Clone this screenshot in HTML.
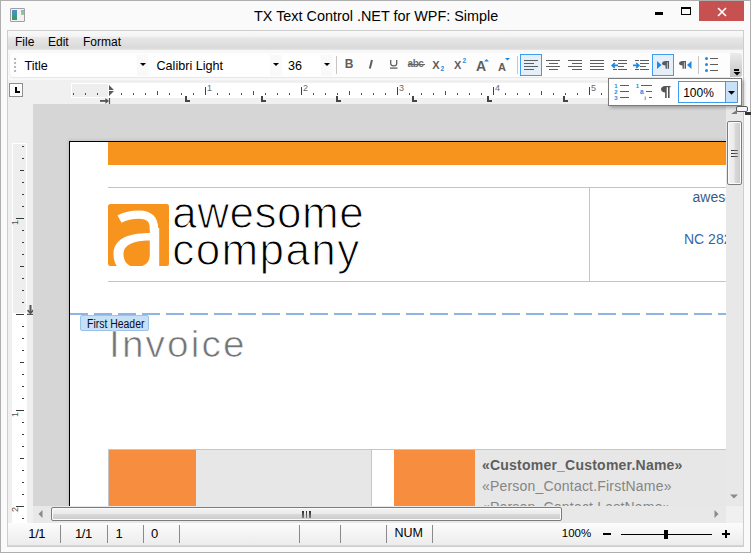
<!DOCTYPE html>
<html><head><meta charset="utf-8">
<style>
*{margin:0;padding:0;box-sizing:border-box}
html,body{width:751px;height:553px;overflow:hidden}
body{position:relative;background:#fafafa;font-family:"Liberation Sans",sans-serif;color:#000}
.a{position:absolute}
.t{position:absolute;white-space:nowrap;line-height:1}
svg{position:absolute;overflow:visible}
</style></head><body>

<div class="a" style="left:0px;top:0px;width:751px;height:553px;border:1px solid #aeaeae"></div>
<div class="a" style="left:10px;top:8px;width:15px;height:14px;border:1px solid #a0a0a0;background:#f2f2f2;border-radius:1px"></div>
<div class="a" style="left:12px;top:10px;width:5px;height:10px;background:linear-gradient(#4a8fcf,#3b9a5a)"></div>
<div class="a" style="left:21px;top:10px;width:3px;height:5px;background:linear-gradient(#7fb0e0,#9fd080)"></div>
<div class="t" style="left:254px;top:8.6px;font-size:14.4px;color:#000">TX Text Control .NET for WPF: Simple</div>
<div class="a" style="left:655px;top:12px;width:8px;height:3px;background:#000"></div>
<div class="a" style="left:681px;top:7px;width:10px;height:8px;border:1px solid #000;border-top-width:2px"></div>
<div class="a" style="left:699px;top:1px;width:45px;height:20px;background:#c75050"></div>
<svg style="left:717px;top:8px" width="10" height="8" viewBox="0 0 10 8"><path d="M1 0 L9 8 M9 0 L1 8" stroke="#fff" stroke-width="1.7"/></svg>
<div class="a" style="left:7px;top:30px;width:737px;height:517px;border:1px solid #cdcdcd;background:#f0f0f0"></div>
<div class="a" style="left:8px;top:31px;width:735px;height:19px;background:linear-gradient(#f8f8f8 0px,#f5f5f5 5px,#e7e7e7 7px,#dadada 17px,#e6e6e6 19px)"></div>
<div class="t" style="left:15px;top:35.6px;font-size:12px">File</div>
<div class="t" style="left:48px;top:35.6px;font-size:12px">Edit</div>
<div class="t" style="left:83px;top:35.6px;font-size:12px">Format</div>
<div class="a" style="left:8px;top:50px;width:735px;height:30px;background:#f8f8f8"></div>
<div class="a" style="left:10px;top:53px;width:722px;height:24px;background:#fdfdfd;border-radius:3px;box-shadow:0 1px 0 #e8e8e8,-1px 0 0 #f0f0f0"></div>
<div class="a" style="left:730px;top:53px;width:12px;height:24px;background:linear-gradient(#ebebeb,#c4c4c4);border-radius:0 3px 3px 0"></div>
<div class="a" style="left:734px;top:69px;width:5px;height:2px;background:#000"></div>
<svg style="left:733px;top:72px" width="8" height="4" viewBox="0 0 8 4"><path d="M0.5 0 L7.5 0 L4 3.6Z" fill="#000"/></svg>
<div class="a" style="left:14px;top:58px;width:2px;height:2px;background:#b8b8b8"></div>
<div class="a" style="left:14px;top:62px;width:2px;height:2px;background:#b8b8b8"></div>
<div class="a" style="left:14px;top:66px;width:2px;height:2px;background:#b8b8b8"></div>
<div class="a" style="left:14px;top:70px;width:2px;height:2px;background:#b8b8b8"></div>
<div class="a" style="left:19px;top:55px;width:129px;height:20.7px;background:#fff"></div>
<div class="a" style="left:137px;top:55px;width:11px;height:20.7px;background:#f9f9fa"></div>
<svg style="left:139.5px;top:63px" width="6" height="3" viewBox="0 0 6 3"><path d="M0 0 L6 0 L3 3Z" fill="#000"/></svg>
<div class="t" style="left:24.5px;top:60.0px;font-size:12.6px">Title</div>
<div class="a" style="left:151px;top:55px;width:130px;height:20.7px;background:#fff"></div>
<div class="a" style="left:270px;top:55px;width:11px;height:20.7px;background:#f9f9fa"></div>
<svg style="left:272.5px;top:63px" width="6" height="3" viewBox="0 0 6 3"><path d="M0 0 L6 0 L3 3Z" fill="#000"/></svg>
<div class="t" style="left:156.5px;top:60.0px;font-size:12.6px">Calibri Light</div>
<div class="a" style="left:283px;top:55px;width:49px;height:20.7px;background:#fff"></div>
<div class="a" style="left:321px;top:55px;width:11px;height:20.7px;background:#f9f9fa"></div>
<svg style="left:323.5px;top:63px" width="6" height="3" viewBox="0 0 6 3"><path d="M0 0 L6 0 L3 3Z" fill="#000"/></svg>
<div class="t" style="left:288px;top:60.0px;font-size:12.6px">36</div>
<div class="a" style="left:336px;top:56px;width:1px;height:18px;background:#c6c6c6"></div>
<div class="a" style="left:517px;top:56px;width:1px;height:18px;background:#c6c6c6"></div>
<div class="a" style="left:698px;top:56px;width:1px;height:18px;background:#c6c6c6"></div>
<div class="t" style="left:344.7px;top:58.4px;font-size:12px;font-weight:bold;color:#5e5e5e">B</div>
<svg style="left:367px;top:59px" width="8" height="11" viewBox="0 0 8 11"><path d="M5.0 1 L2.8 9.5" stroke="#5e5e5e" stroke-width="2"/></svg>
<svg style="left:389px;top:60px" width="10" height="10" viewBox="0 0 10 10"><path d="M1.7 0 V3.6 Q1.7 5.8 4.7 5.8 Q7.7 5.8 7.7 3.6 V0" fill="none" stroke="#5e5e5e" stroke-width="1.3"/><path d="M1 8.1 H8.5" stroke="#5e5e5e" stroke-width="1.3"/></svg>
<div class="t" style="left:407.6px;top:58.8px;font-size:10px;font-weight:bold;color:#6e6e6e;letter-spacing:-0.5px">abc</div>
<div class="a" style="left:407.5px;top:63.5px;width:17px;height:1px;background:#666"></div>
<div class="t" style="left:432.2px;top:59.8px;font-size:11px;font-weight:bold;color:#5e5e5e">X</div>
<div class="t" style="left:440.5px;top:65.7px;font-size:6.5px;font-weight:bold;color:#1a8ae8">2</div>
<div class="t" style="left:454.0px;top:59.8px;font-size:11px;font-weight:bold;color:#5e5e5e">X</div>
<div class="t" style="left:462.6px;top:58.25px;font-size:6.5px;font-weight:bold;color:#1a8ae8">2</div>
<div class="t" style="left:475.9px;top:59px;font-size:14px;font-weight:bold;color:#5e5e5e">A</div>
<svg style="left:484.2px;top:58.5px" width="5" height="2.5" viewBox="0 0 5 2.5"><path d="M0 2.5 L5 2.5 L2.5 0Z" fill="#1a8ae8"/></svg>
<div class="t" style="left:497.9px;top:61.6px;font-size:11px;font-weight:bold;color:#5e5e5e">A</div>
<svg style="left:505px;top:58.4px" width="5" height="2.5" viewBox="0 0 5 2.5"><path d="M0 0 L5 0 L2.5 2.5Z" fill="#1a8ae8"/></svg>
<div class="a" style="left:520px;top:54px;width:22px;height:22px;background:#e4effa;border:1px solid #3d9bf0"></div>
<div class="a" style="left:652px;top:54px;width:22px;height:22px;background:#e4effa;border:1px solid #3d9bf0"></div>
<div class="a" style="left:524px;top:60px;width:14px;height:1.4px;background:#5e5e5e"></div><div class="a" style="left:524px;top:63px;width:10px;height:1.4px;background:#5e5e5e"></div><div class="a" style="left:524px;top:66px;width:14px;height:1.4px;background:#5e5e5e"></div><div class="a" style="left:524px;top:69px;width:10px;height:1.4px;background:#5e5e5e"></div>
<div class="a" style="left:546px;top:60px;width:14px;height:1.4px;background:#5e5e5e"></div><div class="a" style="left:548.5px;top:63px;width:9.5px;height:1.4px;background:#5e5e5e"></div><div class="a" style="left:546px;top:66px;width:14px;height:1.4px;background:#5e5e5e"></div><div class="a" style="left:548.5px;top:69px;width:9.5px;height:1.4px;background:#5e5e5e"></div>
<div class="a" style="left:568px;top:60px;width:14px;height:1.4px;background:#5e5e5e"></div><div class="a" style="left:572px;top:63px;width:10px;height:1.4px;background:#5e5e5e"></div><div class="a" style="left:568px;top:66px;width:14px;height:1.4px;background:#5e5e5e"></div><div class="a" style="left:572px;top:69px;width:10px;height:1.4px;background:#5e5e5e"></div>
<div class="a" style="left:590px;top:60px;width:14px;height:1.4px;background:#5e5e5e"></div><div class="a" style="left:590px;top:63px;width:14px;height:1.4px;background:#5e5e5e"></div><div class="a" style="left:590px;top:66px;width:14px;height:1.4px;background:#5e5e5e"></div><div class="a" style="left:590px;top:69px;width:14px;height:1.4px;background:#5e5e5e"></div>
<div class="a" style="left:613px;top:60px;width:4px;height:1.4px;background:#5e5e5e"></div><div class="a" style="left:618px;top:63px;width:9px;height:1.4px;background:#5e5e5e"></div><div class="a" style="left:618px;top:66px;width:5.800000000000001px;height:1.4px;background:#5e5e5e"></div><div class="a" style="left:613px;top:69px;width:4px;height:1.4px;background:#5e5e5e"></div>
<div class="a" style="left:618px;top:60px;width:9px;height:1.4px;background:#5e5e5e"></div><div class="a" style="left:618px;top:69px;width:9px;height:1.4px;background:#5e5e5e"></div>
<div class="a" style="left:635px;top:60px;width:4px;height:1.4px;background:#5e5e5e"></div><div class="a" style="left:640px;top:63px;width:9px;height:1.4px;background:#5e5e5e"></div><div class="a" style="left:640px;top:66px;width:5.800000000000001px;height:1.4px;background:#5e5e5e"></div><div class="a" style="left:635px;top:69px;width:4px;height:1.4px;background:#5e5e5e"></div>
<div class="a" style="left:640px;top:60px;width:9px;height:1.4px;background:#5e5e5e"></div><div class="a" style="left:640px;top:69px;width:9px;height:1.4px;background:#5e5e5e"></div>
<svg style="left:611px;top:61.5px" width="8" height="7" viewBox="0 0 8 7"><path d="M7 3.4 H1.5 M3.8 1 L1.2 3.4 L3.8 5.8" fill="none" stroke="#1a8ae8" stroke-width="1.7"/></svg>
<svg style="left:633px;top:61.5px" width="8" height="7" viewBox="0 0 8 7"><path d="M0 3.4 H5.5 M3.2 1 L5.8 3.4 L3.2 5.8" fill="none" stroke="#1a8ae8" stroke-width="1.7"/></svg>
<svg style="left:657px;top:61px" width="5" height="8" viewBox="0 0 5 8"><path d="M0 0 L4.5 4 L0 8Z" fill="#1a8ae8"/></svg>
<svg style="left:662px;top:61px" width="7" height="8" viewBox="0 0 7 8"><path d="M4.6 0 H7 V7.7 H5.6 V1.3 H4.9 V7.7 H3.5 V4.6 C1.5 4.6 0 3.6 0 2.3 C0 1 1.5 0 3.5 0 Z" fill="#5a5a5a"/></svg>
<svg style="left:679px;top:61px" width="7" height="8" viewBox="0 0 7 8"><path d="M4.6 0 H7 V7.7 H5.6 V1.3 H4.9 V7.7 H3.5 V4.6 C1.5 4.6 0 3.6 0 2.3 C0 1 1.5 0 3.5 0 Z" fill="#5a5a5a"/></svg>
<svg style="left:686.5px;top:61px" width="5" height="8" viewBox="0 0 5 8"><path d="M4.5 0 L0 4 L4.5 8Z" fill="#1a8ae8"/></svg>
<div class="a" style="left:705px;top:56.9px;width:3px;height:3px;border-radius:50%;background:#1a8ae8"></div>
<div class="a" style="left:710px;top:57.8px;width:8px;height:1.3px;background:#5e5e5e"></div>
<div class="a" style="left:705px;top:62.900000000000006px;width:3px;height:3px;border-radius:50%;background:#1a8ae8"></div>
<div class="a" style="left:710px;top:63.800000000000004px;width:8px;height:1.3px;background:#5e5e5e"></div>
<div class="a" style="left:705px;top:68.9px;width:3px;height:3px;border-radius:50%;background:#1a8ae8"></div>
<div class="a" style="left:710px;top:69.80000000000001px;width:8px;height:1.3px;background:#5e5e5e"></div>
<div class="a" style="left:8px;top:80px;width:735px;height:24px;background:#f0f0f0"></div>
<div class="a" style="left:9px;top:83px;width:14px;height:14px;background:#fbfbfb;border:1px solid #8e8e8e"></div>
<div class="a" style="left:15px;top:87px;width:2px;height:6px;background:#000"></div>
<div class="a" style="left:15px;top:91px;width:5px;height:2px;background:#000"></div>
<div class="a" style="left:71px;top:83px;width:537px;height:15px;background:#ffffff"></div>
<div class="a" style="left:72px;top:84px;width:36px;height:13px;background:#eeeeee"></div>
<div class="a" style="left:73px;top:93px;width:1px;height:2px;background:#505050"></div><div class="a" style="left:85px;top:93px;width:1px;height:2px;background:#505050"></div><div class="a" style="left:97px;top:93px;width:1px;height:2px;background:#505050"></div><div class="a" style="left:121px;top:93px;width:1px;height:2px;background:#505050"></div><div class="a" style="left:133px;top:93px;width:1px;height:2px;background:#505050"></div><div class="a" style="left:145px;top:93px;width:1px;height:2px;background:#505050"></div><div class="a" style="left:157px;top:91px;width:1px;height:4px;background:#505050"></div><div class="a" style="left:169px;top:93px;width:1px;height:2px;background:#505050"></div><div class="a" style="left:181px;top:93px;width:1px;height:2px;background:#505050"></div><div class="a" style="left:193px;top:93px;width:1px;height:2px;background:#505050"></div><div class="a" style="left:205px;top:87px;width:1px;height:8px;background:#404040"></div><div class="t" style="left:207px;top:83.5px;font-size:9px;color:#6a6a6a">1</div><div class="a" style="left:217px;top:93px;width:1px;height:2px;background:#505050"></div><div class="a" style="left:229px;top:93px;width:1px;height:2px;background:#505050"></div><div class="a" style="left:241px;top:93px;width:1px;height:2px;background:#505050"></div><div class="a" style="left:253px;top:91px;width:1px;height:4px;background:#505050"></div><div class="a" style="left:265px;top:93px;width:1px;height:2px;background:#505050"></div><div class="a" style="left:277px;top:93px;width:1px;height:2px;background:#505050"></div><div class="a" style="left:289px;top:93px;width:1px;height:2px;background:#505050"></div><div class="a" style="left:301px;top:87px;width:1px;height:8px;background:#404040"></div><div class="t" style="left:303px;top:83.5px;font-size:9px;color:#6a6a6a">2</div><div class="a" style="left:313px;top:93px;width:1px;height:2px;background:#505050"></div><div class="a" style="left:325px;top:93px;width:1px;height:2px;background:#505050"></div><div class="a" style="left:337px;top:93px;width:1px;height:2px;background:#505050"></div><div class="a" style="left:349px;top:91px;width:1px;height:4px;background:#505050"></div><div class="a" style="left:361px;top:93px;width:1px;height:2px;background:#505050"></div><div class="a" style="left:373px;top:93px;width:1px;height:2px;background:#505050"></div><div class="a" style="left:385px;top:93px;width:1px;height:2px;background:#505050"></div><div class="a" style="left:397px;top:87px;width:1px;height:8px;background:#404040"></div><div class="t" style="left:399px;top:83.5px;font-size:9px;color:#6a6a6a">3</div><div class="a" style="left:409px;top:93px;width:1px;height:2px;background:#505050"></div><div class="a" style="left:421px;top:93px;width:1px;height:2px;background:#505050"></div><div class="a" style="left:433px;top:93px;width:1px;height:2px;background:#505050"></div><div class="a" style="left:445px;top:91px;width:1px;height:4px;background:#505050"></div><div class="a" style="left:457px;top:93px;width:1px;height:2px;background:#505050"></div><div class="a" style="left:469px;top:93px;width:1px;height:2px;background:#505050"></div><div class="a" style="left:481px;top:93px;width:1px;height:2px;background:#505050"></div><div class="a" style="left:493px;top:87px;width:1px;height:8px;background:#404040"></div><div class="t" style="left:495px;top:83.5px;font-size:9px;color:#6a6a6a">4</div><div class="a" style="left:505px;top:93px;width:1px;height:2px;background:#505050"></div><div class="a" style="left:517px;top:93px;width:1px;height:2px;background:#505050"></div><div class="a" style="left:529px;top:93px;width:1px;height:2px;background:#505050"></div><div class="a" style="left:541px;top:91px;width:1px;height:4px;background:#505050"></div><div class="a" style="left:553px;top:93px;width:1px;height:2px;background:#505050"></div><div class="a" style="left:565px;top:93px;width:1px;height:2px;background:#505050"></div><div class="a" style="left:577px;top:93px;width:1px;height:2px;background:#505050"></div><div class="a" style="left:589px;top:87px;width:1px;height:8px;background:#404040"></div><div class="t" style="left:591px;top:83.5px;font-size:9px;color:#6a6a6a">5</div><div class="a" style="left:601px;top:93px;width:1px;height:2px;background:#505050"></div>
<svg style="left:109px;top:85px" width="6" height="11" viewBox="0 0 6 11"><path d="M0 0 L5 5 L0 5 Z M0 6 L5 6 L0 11Z" fill="#5a5a5a"/></svg>
<svg style="left:100px;top:98px" width="11" height="6" viewBox="0 0 11 6"><path d="M0 2.9 H7" stroke="#555" stroke-width="1.8"/><path d="M5.4 0 L9 2.9 L5.4 5.8Z" fill="#555"/><path d="M9.5 0 V6" stroke="#555" stroke-width="1.2"/></svg>
<div class="a" style="left:185px;top:96px;width:2px;height:6px;background:#454545"></div>
<div class="a" style="left:185px;top:100px;width:5px;height:2px;background:#454545"></div>
<div class="a" style="left:261px;top:96px;width:2px;height:6px;background:#454545"></div>
<div class="a" style="left:261px;top:100px;width:5px;height:2px;background:#454545"></div>
<div class="a" style="left:336px;top:96px;width:2px;height:6px;background:#454545"></div>
<div class="a" style="left:336px;top:100px;width:5px;height:2px;background:#454545"></div>
<div class="a" style="left:412px;top:96px;width:2px;height:6px;background:#454545"></div>
<div class="a" style="left:412px;top:100px;width:5px;height:2px;background:#454545"></div>
<div class="a" style="left:487px;top:96px;width:2px;height:6px;background:#454545"></div>
<div class="a" style="left:487px;top:100px;width:5px;height:2px;background:#454545"></div>
<div class="a" style="left:563px;top:96px;width:2px;height:6px;background:#454545"></div>
<div class="a" style="left:563px;top:100px;width:5px;height:2px;background:#454545"></div>
<div class="a" style="left:8px;top:104px;width:25px;height:419px;background:#f0f0f0"></div>
<div class="a" style="left:12px;top:143px;width:15px;height:380px;background:#ffffff"></div>
<div class="a" style="left:13px;top:144px;width:13px;height:169px;background:#eeeeee"></div>
<div class="a" style="left:22px;top:146px;width:2px;height:1px;background:#3a3a3a"></div><div class="a" style="left:22px;top:158px;width:2px;height:1px;background:#3a3a3a"></div><div class="a" style="left:20px;top:170px;width:4px;height:1px;background:#3a3a3a"></div><div class="a" style="left:22px;top:182px;width:2px;height:1px;background:#3a3a3a"></div><div class="a" style="left:22px;top:194px;width:2px;height:1px;background:#3a3a3a"></div><div class="a" style="left:22px;top:206px;width:2px;height:1px;background:#3a3a3a"></div><div class="a" style="left:16px;top:218px;width:8px;height:1px;background:#3a3a3a"></div><div class="a" style="left:22px;top:230px;width:2px;height:1px;background:#3a3a3a"></div><div class="a" style="left:22px;top:242px;width:2px;height:1px;background:#3a3a3a"></div><div class="a" style="left:22px;top:254px;width:2px;height:1px;background:#3a3a3a"></div><div class="a" style="left:20px;top:266px;width:4px;height:1px;background:#3a3a3a"></div><div class="a" style="left:22px;top:278px;width:2px;height:1px;background:#3a3a3a"></div><div class="a" style="left:22px;top:290px;width:2px;height:1px;background:#3a3a3a"></div><div class="a" style="left:22px;top:302px;width:2px;height:1px;background:#3a3a3a"></div><div class="a" style="left:16px;top:314px;width:8px;height:1px;background:#3a3a3a"></div><div class="a" style="left:22px;top:326px;width:2px;height:1px;background:#3a3a3a"></div><div class="a" style="left:22px;top:338px;width:2px;height:1px;background:#3a3a3a"></div><div class="a" style="left:22px;top:350px;width:2px;height:1px;background:#3a3a3a"></div><div class="a" style="left:20px;top:362px;width:4px;height:1px;background:#3a3a3a"></div><div class="a" style="left:22px;top:374px;width:2px;height:1px;background:#3a3a3a"></div><div class="a" style="left:22px;top:386px;width:2px;height:1px;background:#3a3a3a"></div><div class="a" style="left:22px;top:398px;width:2px;height:1px;background:#3a3a3a"></div><div class="a" style="left:16px;top:410px;width:8px;height:1px;background:#3a3a3a"></div><div class="a" style="left:22px;top:422px;width:2px;height:1px;background:#3a3a3a"></div><div class="a" style="left:22px;top:434px;width:2px;height:1px;background:#3a3a3a"></div><div class="a" style="left:22px;top:446px;width:2px;height:1px;background:#3a3a3a"></div><div class="a" style="left:20px;top:458px;width:4px;height:1px;background:#3a3a3a"></div><div class="a" style="left:22px;top:470px;width:2px;height:1px;background:#3a3a3a"></div><div class="a" style="left:22px;top:482px;width:2px;height:1px;background:#3a3a3a"></div><div class="a" style="left:22px;top:494px;width:2px;height:1px;background:#3a3a3a"></div><div class="a" style="left:16px;top:506px;width:8px;height:1px;background:#3a3a3a"></div><div class="a" style="left:22px;top:518px;width:2px;height:1px;background:#3a3a3a"></div>
<div class="t" style="left:11.3px;top:224.8px;font-size:9px;color:#505050;transform:rotate(-90deg);transform-origin:0 0">1</div>
<div class="t" style="left:11.3px;top:416.9px;font-size:9px;color:#505050;transform:rotate(-90deg);transform-origin:0 0">1</div>
<div class="t" style="left:11.3px;top:512px;font-size:9px;color:#505050;transform:rotate(-90deg);transform-origin:0 0">2</div>
<svg style="left:27px;top:305px" width="7" height="11" viewBox="0 0 7 11"><path d="M3.5 0 V7.5" stroke="#555" stroke-width="2"/><path d="M0.6 5.2 L3.5 8.3 L6.4 5.2" fill="none" stroke="#555" stroke-width="1.7"/><path d="M0 9.4 H7" stroke="#555" stroke-width="1.2"/></svg>
<div class="a" style="left:33px;top:104px;width:693px;height:402px;overflow:hidden;background:#d6d6d6">
<div class="a" style="left:36px;top:37px;width:720px;height:420px;background:#fff;border-left:1px solid #000;border-top:1px solid #000;box-shadow:-1px -1px 3px rgba(0,0,0,0.10)"></div>
<div class="a" style="left:75px;top:38px;width:640px;height:22.5px;background:#f7941e"></div>
<div class="a" style="left:75px;top:83px;width:640px;height:1px;background:#c4c4c4"></div>
<div class="a" style="left:75px;top:177px;width:640px;height:1px;background:#c4c4c4"></div>
<div class="a" style="left:556px;top:84px;width:1px;height:93px;background:#c4c4c4"></div>
<svg style="left:75px;top:100px" width="61" height="62" viewBox="0 0 61 62"><defs><clipPath id="cl"><rect x="0" y="0" width="61" height="62" rx="2.5"/></clipPath></defs><g clip-path="url(#cl)"><rect x="0" y="0" width="61" height="62" fill="#f7941e"/><path d="M11.5 15 C 18 11.5, 25 10.6, 31 10.6 C 42 10.6, 46 16, 46 25" fill="none" stroke="#fff" stroke-width="8.4"/><rect x="41.8" y="24" width="9.4" height="40" fill="#fff"/><path fill-rule="evenodd" fill="#fff" d="M42 29 C 26 29, 5.5 32, 5.5 50 C 5.5 64, 16 72, 30 72 L 42 72 Z M42 36.5 C 31 36.5, 15.5 38.5, 15.5 50 C 15.5 58.5, 21 63, 28 63 C 36 63, 42 59, 42 50 Z"/></g></svg>
<div class="t" style="left:139.3px;top:87px;font-size:44px;color:#000;letter-spacing:0.5px;-webkit-text-stroke:1.1px #fff">awesome</div>
<div class="t" style="left:139.3px;top:124.2px;font-size:44px;color:#000;letter-spacing:1.4px;-webkit-text-stroke:1.1px #fff">company</div>
<div class="t" style="left:659.5px;top:86.1px;font-size:14px;color:#3b5a8a">awesome</div>
<div class="t" style="left:651px;top:127.6px;font-size:14px;color:#3566a8">NC 28299</div>
<svg style="left:36px;top:209px" width="660" height="2"><line x1="0" y1="1" x2="660" y2="1" stroke="#8db4e3" stroke-width="2" stroke-dasharray="18 6" stroke-dashoffset="-1"/></svg>
<div class="a" style="left:47px;top:211px;width:69px;height:16px;background:#c6e0f6;border:1px solid #9cc4ea;border-radius:2px"></div>
<div class="t" style="left:53.6px;top:214.3px;font-size:12px;color:#0a0a20;transform:scaleX(0.87);transform-origin:0 0">First Header</div>
<div class="t" style="left:76.4px;top:223px;font-size:36px;color:#747474;letter-spacing:2px;-webkit-text-stroke:0.7px #fff;transform:scaleX(1.075);transform-origin:0 0">Invoice</div>
<div class="a" style="left:75px;top:345px;width:640px;height:60px;background:#e7e7e7;border-top:1px solid #c6c6c6;border-left:1px solid #c6c6c6"></div>
<div class="a" style="left:76px;top:346px;width:87px;height:60px;background:#f78d3f"></div>
<div class="a" style="left:338px;top:346px;width:1px;height:60px;background:#c6c6c6"></div>
<div class="a" style="left:339px;top:346px;width:22px;height:60px;background:#fff"></div>
<div class="a" style="left:361px;top:346px;width:81px;height:60px;background:#f78d3f"></div>
<div class="t" style="left:449px;top:354.2px;font-size:14px;font-weight:bold;color:#5e5e5e;letter-spacing:0.22px">&laquo;Customer_Customer.Name&raquo;</div>
<div class="t" style="left:449px;top:374.7px;font-size:14px;color:#858585;letter-spacing:0.2px">&laquo;Person_Contact.FirstName&raquo;</div>
<div class="t" style="left:449px;top:396px;font-size:14px;color:#858585;letter-spacing:0.2px">&laquo;Person_Contact.LastName&raquo;</div>
</div>
<div class="a" style="left:726px;top:104px;width:17px;height:402px;background:#e8e8e8"></div>
<svg style="left:730.5px;top:110px" width="6" height="4" viewBox="0 0 6 4"><path d="M0 4 L6 4 L6 0Z" fill="#7a7a7a"/></svg>
<div class="a" style="left:727px;top:121px;width:15px;height:64px;background:linear-gradient(90deg,#f3f3f3 0%,#ebebeb 45%,#d9d9d9 55%,#c9c9c9 100%);border:1px solid #7c7c7c;border-radius:2px;box-shadow:inset 0 0 0 1px #fbfbfb"></div>
<div class="a" style="left:731px;top:149.6px;width:7px;height:1.6px;background:linear-gradient(90deg,#2a2a2a,#777)"></div>
<div class="a" style="left:731px;top:152.6px;width:7px;height:1.6px;background:linear-gradient(90deg,#2a2a2a,#777)"></div>
<div class="a" style="left:731px;top:155.6px;width:7px;height:1.6px;background:linear-gradient(90deg,#2a2a2a,#777)"></div>
<svg style="left:730px;top:494px" width="8" height="5" viewBox="0 0 8 5"><path d="M0 0.5 L8 0.5 L4 4.5Z" fill="#8a8a8a"/></svg>
<div class="a" style="left:33px;top:506px;width:693px;height:17px;background:#e8e8e8"></div>
<svg style="left:38px;top:510px" width="5" height="8" viewBox="0 0 5 8"><path d="M4.5 0 L4.5 8 L0.5 4Z" fill="#8a8a8a"/></svg>
<div class="a" style="left:51px;top:507px;width:511px;height:14px;background:linear-gradient(#f3f3f3 0%,#ebebeb 45%,#d9d9d9 55%,#c9c9c9 100%);border:1px solid #7c7c7c;border-radius:2px;box-shadow:inset 0 0 0 1px #fbfbfb"></div>
<div class="a" style="left:302px;top:511px;width:1.7px;height:7px;background:linear-gradient(#2a2a2a,#808080)"></div>
<div class="a" style="left:305.5px;top:511px;width:1.7px;height:7px;background:linear-gradient(#2a2a2a,#808080)"></div>
<div class="a" style="left:309px;top:511px;width:1.7px;height:7px;background:linear-gradient(#2a2a2a,#808080)"></div>
<svg style="left:714px;top:510px" width="5" height="8" viewBox="0 0 5 8"><path d="M0.5 0 L0.5 8 L4.5 4Z" fill="#8a8a8a"/></svg>
<div class="a" style="left:726px;top:506px;width:17px;height:17px;background:#f0f0f0"></div>
<div class="a" style="left:8px;top:523px;width:735px;height:23px;background:linear-gradient(#fcfcfc,#ececec);border-bottom:1px solid #d6d6d6"></div>
<div class="a" style="left:60px;top:525px;width:1px;height:18px;background:#8a8a8a"></div>
<div class="a" style="left:107px;top:525px;width:1px;height:18px;background:#8a8a8a"></div>
<div class="a" style="left:143px;top:525px;width:1px;height:18px;background:#8a8a8a"></div>
<div class="a" style="left:179px;top:525px;width:1px;height:18px;background:#8a8a8a"></div>
<div class="a" style="left:299px;top:525px;width:1px;height:18px;background:#8a8a8a"></div>
<div class="a" style="left:340px;top:525px;width:1px;height:18px;background:#8a8a8a"></div>
<div class="a" style="left:386px;top:525px;width:1px;height:18px;background:#8a8a8a"></div>
<div class="a" style="left:432px;top:525px;width:1px;height:18px;background:#8a8a8a"></div>
<div class="t" style="left:28.3px;top:527.3px;font-size:13px;letter-spacing:-0.4px">1/1</div>
<div class="t" style="left:75px;top:527.3px;font-size:13px;letter-spacing:-0.4px">1/1</div>
<div class="t" style="left:115.5px;top:527.3px;font-size:13px">1</div>
<div class="t" style="left:151px;top:527.3px;font-size:13px">0</div>
<div class="t" style="left:394.5px;top:527.3px;font-size:12.5px">NUM</div>
<div class="t" style="left:561.8px;top:528.2px;font-size:11.5px">100%</div>
<div class="a" style="left:603px;top:533px;width:8px;height:2px;background:#000"></div>
<div class="a" style="left:621px;top:533.5px;width:91px;height:1px;background:#000"></div>
<div class="a" style="left:664px;top:530px;width:4px;height:9px;background:#000"></div>
<div class="a" style="left:722px;top:533px;width:8px;height:2px;background:#000"></div>
<div class="a" style="left:725px;top:530px;width:2px;height:8px;background:#000"></div>
<div class="a" style="left:608px;top:78px;width:134px;height:28px;background:#fff;border:1px solid #7a7a7a;box-shadow:2px 2px 3px rgba(0,0,0,0.25)"></div>
<div class="t" style="left:614.3px;top:83.1px;font-size:6px;font-weight:bold;color:#1a8ae8">1</div>
<div class="a" style="left:620px;top:84.8px;width:9px;height:1.2px;background:#5e5e5e"></div>
<div class="t" style="left:614.3px;top:89.1px;font-size:6px;font-weight:bold;color:#1a8ae8">2</div>
<div class="a" style="left:620px;top:90.8px;width:9px;height:1.2px;background:#5e5e5e"></div>
<div class="t" style="left:614.3px;top:95.2px;font-size:6px;font-weight:bold;color:#1a8ae8">3</div>
<div class="a" style="left:620px;top:96.9px;width:9px;height:1.2px;background:#5e5e5e"></div>
<div class="t" style="left:635.7px;top:83.1px;font-size:6px;font-weight:bold;color:#1a8ae8">1</div>
<div class="t" style="left:640px;top:88.6px;font-size:6.5px;font-weight:bold;color:#1a8ae8">a</div>
<div class="t" style="left:644.2px;top:95.2px;font-size:6px;font-weight:bold;color:#1a8ae8">i</div>
<div class="a" style="left:641px;top:84.8px;width:11px;height:1.2px;background:#5e5e5e"></div>
<div class="a" style="left:646.2px;top:90.8px;width:5.6px;height:1.2px;background:#5e5e5e"></div>
<div class="a" style="left:649px;top:96.9px;width:2.8px;height:1.2px;background:#5e5e5e"></div>
<svg style="left:661px;top:86px" width="9.5" height="12" viewBox="0 0 9.5 12"><path d="M4 0 H9.5 V1.3 H8.6 V12 H7 V1.3 H5.7 V12 H4.1 V6.6 C1.8 6.6 0 5.2 0 3.3 C0 1.4 1.8 0 4 0Z" fill="#555"/></svg>
<div class="a" style="left:678px;top:81px;width:60px;height:22px;background:#fff;border:1px solid #3d9bf0"></div>
<div class="a" style="left:725px;top:82px;width:12px;height:20px;background:#c7e1f8;border-left:1px solid #3d9bf0"></div>
<svg style="left:728px;top:91px" width="7" height="4" viewBox="0 0 7 4"><path d="M0 0 L7 0 L3.5 3.8Z" fill="#000"/></svg>
<div class="t" style="left:683.2px;top:86.8px;font-size:12px">100%</div>
<div class="a" style="left:736px;top:105.5px;width:12px;height:6.5px;background:#f6f6fc;border:1px solid #5a5a5a;border-radius:2px"></div>
<div class="a" style="left:745px;top:112px;width:6px;height:2.5px;background:#333"></div>
</body></html>
